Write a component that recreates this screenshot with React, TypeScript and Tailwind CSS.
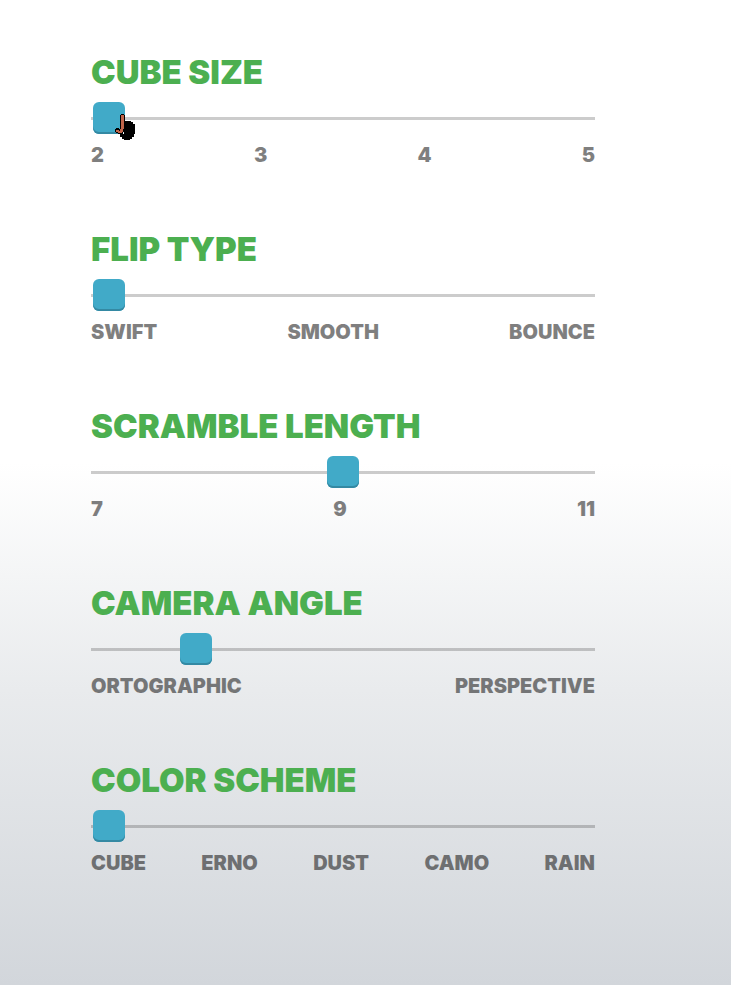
import React, { useState } from 'react';

interface Setting {
  id: string;
  title: string;
  min: number;
  max: number;
  step: number;
  initial: number;
  labels: string[];
}

const settings: Setting[] = [
  { id: 'size', title: 'CUBE SIZE', min: 2, max: 5, step: 1, initial: 2, labels: ['2', '3', '4', '5'] },
  { id: 'flip', title: 'FLIP TYPE', min: 0, max: 2, step: 1, initial: 0, labels: ['SWIFT', 'SMOOTH', 'BOUNCE'] },
  { id: 'scramble', title: 'SCRAMBLE LENGTH', min: 7, max: 11, step: 1, initial: 9, labels: ['7', '9', '11'] },
  { id: 'fov', title: 'CAMERA ANGLE', min: 0, max: 1000, step: 1, initial: 186, labels: ['ORTOGRAPHIC', 'PERSPECTIVE'] },
  { id: 'theme', title: 'COLOR SCHEME', min: 0, max: 4, step: 1, initial: 0, labels: ['CUBE', 'ERNO', 'DUST', 'CAMO', 'RAIN'] },
];

// Hand pointer resting on the first thumb
const HandCursor: React.FC = () => (
  <svg
    className="absolute left-6 top-[11px] pointer-events-none"
    width="21"
    height="28"
    viewBox="0 0 21 28"
    shapeRendering="crispEdges"
    aria-hidden="true"
  >
    <path d="M9 8h7v1h2v2h2v10h-1v3h-2v2h-2v1H9v-1H7v-2H5v-3h4z" fill="#000" />
    <path d="M6 1h3v1h1v15H9v2H8v2H3v-1H1v-1H0v-3h1v-1h3v1h1V2h1z" fill="#000" />
    <path d="M6 2h3v14H8v3H7v1H3v-1H1v-2h3v1h1v-2h1z" fill="#c0654a" />
  </svg>
);

const RangeSetting: React.FC<{ setting: Setting; children?: React.ReactNode }> = ({ setting, children }) => {
  const [value, setValue] = useState(setting.initial);

  return (
    <section>
      <label htmlFor={setting.id} className="block text-[33px] leading-8 font-black text-[#4caf50]">
        {setting.title}
      </label>
      <div className="relative mt-[14px] h-8">
        <input
          id={setting.id}
          type="range"
          min={setting.min}
          max={setting.max}
          step={setting.step}
          value={value}
          onChange={(e) => setValue(Number(e.target.value))}
          className="block w-full h-8 px-[2px] appearance-none cursor-pointer outline-none bg-[linear-gradient(rgba(0,0,0,0.2),rgba(0,0,0,0.2))] bg-[length:100%_3px] bg-center bg-no-repeat [&::-webkit-slider-thumb]:appearance-none [&::-webkit-slider-thumb]:w-8 [&::-webkit-slider-thumb]:h-8 [&::-webkit-slider-thumb]:rounded-md [&::-webkit-slider-thumb]:bg-[#41aac8] [&::-webkit-slider-thumb]:shadow-[inset_0_-2px_0_#3489a3]"
        />
        {children}
      </div>
      <div className="mt-[9px] flex justify-between text-[20px] leading-6 font-black text-black/50">
        {setting.labels.map((label) => (
          <span key={label}>{label}</span>
        ))}
      </div>
    </section>
  );
};

export default function App() {
  return (
    <main className="min-h-screen bg-[linear-gradient(to_bottom,#ffffff_47%,#e9ebed_70%,#d2d6db_100%)] pt-14 pr-[136px] pb-14 pl-[91px] font-['Inter','Liberation_Sans',sans-serif]">
      <div className="flex flex-col gap-[66px]">
        {settings.map((setting) => (
          <RangeSetting key={setting.id} setting={setting}>
            {setting.id === 'size' && <HandCursor />}
          </RangeSetting>
        ))}
      </div>
    </main>
  );
}
